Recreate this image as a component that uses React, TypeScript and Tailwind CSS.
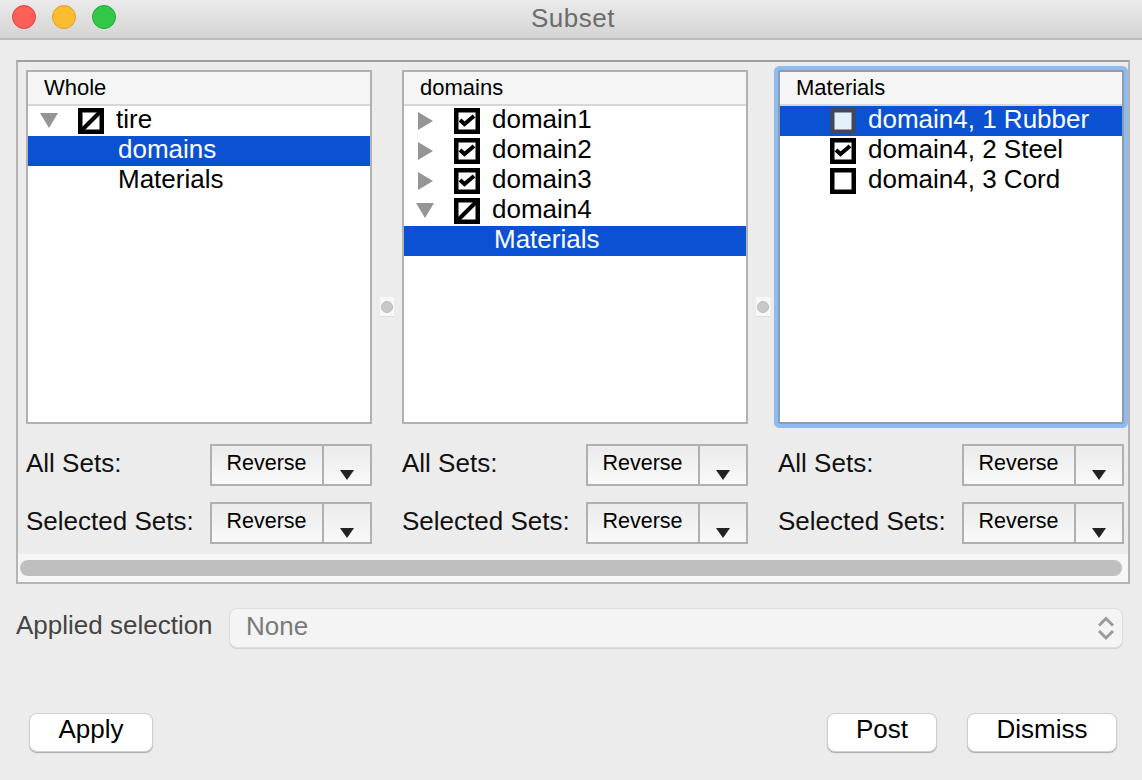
import React from 'react';

type Check = 'on' | 'off' | 'mixed';

interface TreeRow {
  label: string;
  arrow?: 'down' | 'right';
  check?: Check;
  selected?: boolean;
}

const wholeRows: TreeRow[] = [
  { label: 'tire', arrow: 'down', check: 'mixed' },
  { label: 'domains', selected: true },
  { label: 'Materials' },
];

const domainRows: TreeRow[] = [
  { label: 'domain1', arrow: 'right', check: 'on' },
  { label: 'domain2', arrow: 'right', check: 'on' },
  { label: 'domain3', arrow: 'right', check: 'on' },
  { label: 'domain4', arrow: 'down', check: 'mixed' },
  { label: 'Materials', selected: true },
];

const materialRows: TreeRow[] = [
  { label: 'domain4, 1 Rubber', check: 'off', selected: true },
  { label: 'domain4, 2 Steel', check: 'on' },
  { label: 'domain4, 3 Cord', check: 'off' },
];

function CheckBox({ state, selected }: { state: Check; selected?: boolean }) {
  const edge = selected ? '#3d4a60' : '#000000';
  const fill = selected ? '#e6effc' : '#ffffff';
  return (
    <svg width="26" height="26" viewBox="0 0 26 26" className="shrink-0">
      <rect x="2.25" y="2.25" width="21.5" height="21.5" fill={fill} stroke={edge} strokeWidth="4.5" />
      {state === 'on' && (
        <path d="M6 12 L10.5 16 L20 8" fill="none" stroke="#000" strokeWidth="4" />
      )}
      {state === 'mixed' && <path d="M3 23 L23 3" fill="none" stroke="#000" strokeWidth="4" />}
    </svg>
  );
}

function Arrow({ dir }: { dir: 'down' | 'right' }) {
  if (dir === 'down') {
    return (
      <svg width="18" height="16" viewBox="0 0 18 16" className="ml-[12px] shrink-0">
        <path d="M0 0 H18 L9 15 Z" fill="#959595" />
      </svg>
    );
  }
  return (
    <svg width="15" height="18" viewBox="0 0 15 18" className="ml-[14px] shrink-0">
      <path d="M0 0 L15 9 L0 18 Z" fill="#959595" />
    </svg>
  );
}

function Row({ row }: { row: TreeRow }) {
  const tone = row.selected ? 'bg-[#0a52d2] text-white' : 'text-black';
  return (
    <div className={`flex h-[30px] items-center ${tone}`}>
      <div className="flex w-[50px] shrink-0 items-center">{row.arrow && <Arrow dir={row.arrow} />}</div>
      {row.check ? (
        <>
          <CheckBox state={row.check} selected={row.selected} />
          <span className="ml-[12px] whitespace-nowrap pb-[4px]">{row.label}</span>
        </>
      ) : (
        <span className="ml-[40px] whitespace-nowrap pb-[4px]">{row.label}</span>
      )}
    </div>
  );
}

function Pane({ title, rows, focused }: { title: string; rows: TreeRow[]; focused?: boolean }) {
  return (
    <div
      className={`flex h-[354px] w-[346px] flex-col border-2 bg-white ${
        focused
          ? 'rounded-[2px] border-[#8d9db0] ring-4 ring-[#8fbcf0]'
          : 'border-[#b0b0b0]'
      }`}
    >
      <div className="flex h-[34px] shrink-0 items-center border-b-2 border-[#d6d6d6] bg-[#f5f5f5] pl-[16px] text-[22px] text-black">
        {title}
      </div>
      {rows.map((row) => (
        <Row key={row.label} row={row} />
      ))}
    </div>
  );
}

function SetRow({ label }: { label: string }) {
  return (
    <div className="flex h-[42px] items-center">
      <div className="w-[184px] shrink-0 pb-[4px] text-[#111]">{label}</div>
      <div className="flex h-[42px] w-[162px] border-2 border-[#b0b0b0] bg-gradient-to-b from-[#ebebeb] to-[#f9f9f9]">
        <div className="flex w-[112px] items-center justify-center border-r-2 border-[#b0b0b0] pb-[3px] pr-[1px] text-[21.5px] text-black">
          Reverse
        </div>
        <div className="flex flex-1 items-end justify-center pb-[4px]">
          <svg width="14" height="10" viewBox="0 0 14 10">
            <path d="M0 0 H14 L7 10 Z" fill="#222222" />
          </svg>
        </div>
      </div>
    </div>
  );
}

function Column({ title, rows, focused }: { title: string; rows: TreeRow[]; focused?: boolean }) {
  return (
    <div className="flex w-[346px] shrink-0 flex-col">
      <Pane title={title} rows={rows} focused={focused} />
      <div className="mt-[20px]">
        <SetRow label="All Sets:" />
      </div>
      <div className="mt-[16px]">
        <SetRow label="Selected Sets:" />
      </div>
    </div>
  );
}

function Splitter() {
  return (
    <div className="flex w-[30px] shrink-0 items-center justify-center">
      <div className="flex h-[20px] w-[14px] items-center justify-center border-b border-[#dcdcdc] bg-[#f8f8f8]">
        <div className="h-[12px] w-[12px] rounded-full border border-[#bbbbbb] bg-[#c8c8c8]" />
      </div>
    </div>
  );
}

function DialogButton({ label, width }: { label: string; width: string }) {
  return (
    <button
      className={`flex h-[39px] items-center justify-center rounded-lg border border-[#cfcfcf] bg-white pb-[7px] text-black shadow-[0_1px_1px_rgba(0,0,0,0.28)] ${width}`}
    >
      {label}
    </button>
  );
}

export default function App() {
  return (
    <div className="flex h-[780px] w-[1142px] flex-col overflow-hidden bg-[#ececec] font-['Liberation_Sans',sans-serif] text-[26px] leading-none">
      {/* Title bar */}
      <div className="flex h-[40px] shrink-0 items-center border-b-2 border-[#bcbcbc] bg-gradient-to-b from-[#ebebeb] to-[#d4d4d4]">
        <div className="flex-1 pb-[4px]">
          <div className="ml-[12px] flex gap-[16px]">
            <div className="h-[24px] w-[24px] rounded-full border border-[#e2463f] bg-[#fc5f57]" />
            <div className="h-[24px] w-[24px] rounded-full border border-[#dfa023] bg-[#fdbc2e]" />
            <div className="h-[24px] w-[24px] rounded-full border border-[#1dad2b] bg-[#33c748]" />
          </div>
        </div>
        <div className="ml-[4px] pb-[2px] tracking-[0.5px] text-[#6c6c6c]">Subset</div>
        <div className="flex-1" />
      </div>

      {/* Group box */}
      <div className="ml-[16px] mt-[20px] flex h-[524px] w-[1114px] shrink-0 flex-col border-2 border-[#b4b4b4] border-t-[#a0a0a0]">
        <div className="flex px-[8px] pt-[8px]">
          <Column title="Whole" rows={wholeRows} />
          <Splitter />
          <Column title="domains" rows={domainRows} />
          <Splitter />
          <Column title="Materials" rows={materialRows} focused />
        </div>
        <div className="mt-[10px] flex h-[28px] items-center bg-[#f6f6f6] px-[2px]">
          <div className="h-[16px] w-[1102px] rounded-full bg-[#bfbfbf]" />
        </div>
      </div>

      {/* Applied selection */}
      <div className="ml-[16px] mt-[24px] flex h-[40px] shrink-0 items-center">
        <div className="w-[213px] shrink-0 pb-[7px] text-[#444444]">Applied selection</div>
        <div className="flex h-[40px] w-[894px] items-center justify-between rounded-lg border border-[#dedede] bg-[#f4f4f4] pl-[16px] pr-[8px] shadow-[0_1px_1px_rgba(0,0,0,0.12)]">
          <span className="pb-[5px] text-[#7a7a7a]">None</span>
          <svg width="16" height="26" viewBox="0 0 16 26">
            <path d="M1 10.5 L8 3.5 L15 10.5 M1 16 L8 23 L15 16" fill="none" stroke="#9a9a9a" strokeWidth="3" />
          </svg>
        </div>
      </div>

      {/* Buttons */}
      <div className="ml-[29px] mt-[65px] flex shrink-0">
        <DialogButton label="Apply" width="w-[124px]" />
        <div className="w-[674px]" />
        <DialogButton label="Post" width="w-[110px]" />
        <div className="w-[30px]" />
        <DialogButton label="Dismiss" width="w-[150px]" />
      </div>
    </div>
  );
}
